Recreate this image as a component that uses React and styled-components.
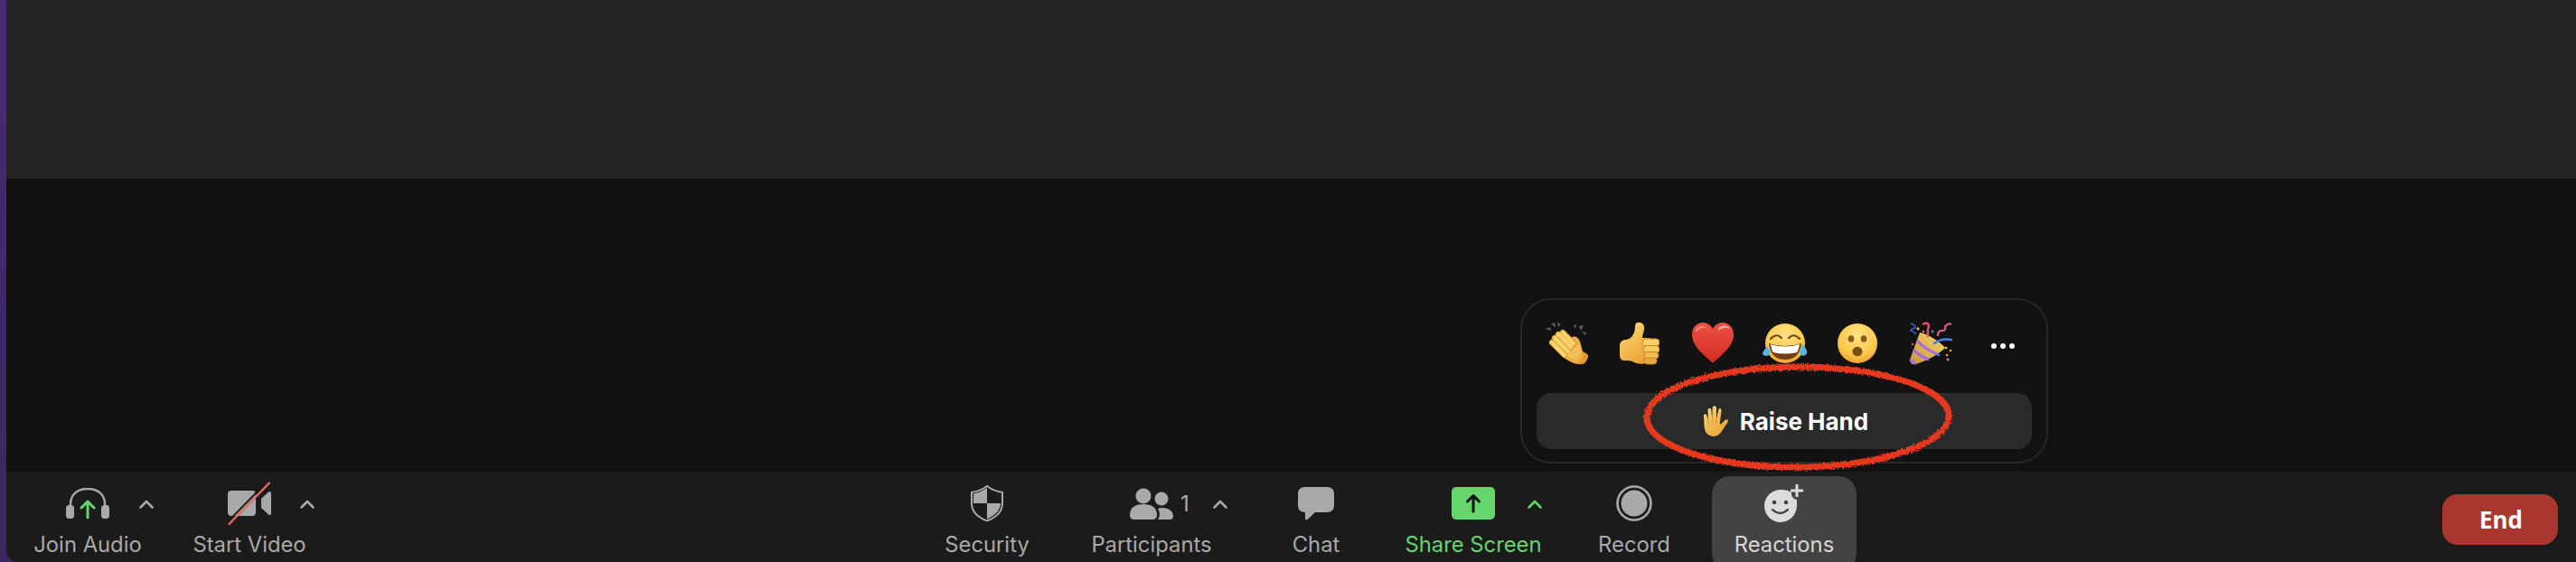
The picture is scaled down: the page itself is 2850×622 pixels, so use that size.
import React from "react";
import styled, { createGlobalStyle } from "styled-components";

const Global = createGlobalStyle`
  html, body { margin: 0; padding: 0; background: #111; }
  body { font-family: "Inter", "Liberation Sans", sans-serif; }
`;

const Page = styled.div`
  width: 2850px;
  height: 622px;
  display: flex;
  overflow: hidden;
  background: linear-gradient(#4a2a72, #38285f);
`;

const Meeting = styled.div`
  margin-left: 7px;
  flex: 1;
  display: flex;
  flex-direction: column;
  background: #111;
  border-bottom-left-radius: 14px;
  overflow: hidden;
`;

const VideoPanel = styled.div`
  height: 198px;
  background: #232323;
`;

const Stage = styled.div`
  flex: 1;
  position: relative;
  background: #111;
`;

const Toolbar = styled.div`
  height: 100px;
  box-sizing: border-box;
  padding: 5px 20px 0 10px;
  display: flex;
  background: #1b1b1b;
`;

const ToolItem = styled.div`
  width: ${(p) => p.$w}px;
  margin-left: ${(p) => p.$gap || 0}px;
  display: flex;
  flex-direction: column;
  align-items: center;
  padding-top: 10px;
  box-sizing: border-box;
  color: ${(p) => (p.$green ? "#64d66b" : p.$active ? "#d6d6d6" : "#a9a9a9")};
  background: ${(p) => (p.$active ? "#434343" : "transparent")};
  border-radius: ${(p) => (p.$active ? "20px" : "0")};
  height: ${(p) => (p.$active ? "105px" : "auto")};
`;

const IconSlot = styled.div`
  position: relative;
  height: 40px;
  display: flex;
  align-items: center;
  justify-content: center;
`;

const Caret = styled.svg`
  position: absolute;
  left: calc(100% + ${(p) => p.$x}px);
  top: 16px;
`;

const Count = styled.span`
  position: absolute;
  left: calc(100% + 8px);
  top: 7px;
  font-size: 24px;
  line-height: 28px;
`;

const ToolLabel = styled.div`
  margin-top: 11px;
  font-size: 23.8px;
  line-height: 30px;
  white-space: nowrap;
`;

const EndButton = styled.button`
  margin: 20px 0 0 auto;
  width: 128px;
  height: 56px;
  padding: 0 0 0 2px;
  border: 0;
  border-radius: 17px;
  background: #a93730;
  color: #fff;
  font-family: "Open Sans", sans-serif;
  font-weight: 700;
  font-size: 26px;
`;

const ReactionPopup = styled.div`
  position: absolute;
  left: 1675px;
  top: 132px;
  width: 584px;
  height: 183px;
  box-sizing: border-box;
  padding: 24px 16px 0;
  background: #121212;
  border: 2px solid #282828;
  border-radius: 34px;
`;

const EmojiRow = styled.div`
  display: grid;
  grid-template-columns: repeat(7, 80.3px);
  height: 48px;
  margin-left: -6px;
  align-items: center;
  justify-items: center;
`;

const Dots = styled.div`
  display: flex;
  gap: 4px;
  margin-top: 6px;
  span {
    width: 6px;
    height: 6px;
    border-radius: 50%;
    background: #fff;
  }
`;

const RaiseHand = styled.div`
  margin-top: 31px;
  height: 62px;
  padding-left: 2px;
  border-radius: 16px;
  background: #2a2a2a;
  display: flex;
  align-items: center;
  justify-content: center;
  gap: 12px;
  color: #fff;
  font-weight: 700;
  font-size: 26px;
`;

const Scribble = styled.svg`
  position: absolute;
  left: 126px;
  top: 67px;
  pointer-events: none;
`;

const Chevron = ({ x, color = "currentColor" }) => (
  <Caret $x={x} width="16" height="10" viewBox="0 0 16 10" fill="none">
    <path d="M1.500 8.500 8 2l6.500 6.500" stroke={color} strokeWidth="2.600" strokeLinecap="round" strokeLinejoin="round" />
  </Caret>
);

const Headset = () => (
  <svg width="48" height="34" viewBox="0 0 48 34" fill="none">
    <path d="M5 20 V18 C5 7 13 1 24 1 S43 7 43 18 V20" stroke="#a9a9a9" strokeWidth="2.400" />
    <rect x="0" y="19" width="9" height="15" rx="3.500" fill="#a9a9a9" />
    <rect x="39" y="19" width="9" height="15" rx="3.500" fill="#a9a9a9" />
    <path d="M24 33 V16 M17 22 l7 -7 l7 7" stroke="#64d66b" strokeWidth="3" strokeLinecap="round" strokeLinejoin="round" />
  </svg>
);

const VideoOff = () => (
  <svg width="48" height="48" viewBox="0 0 48 48" fill="none">
    <rect x="0" y="10" width="31" height="28" rx="4" fill="#a9a9a9" />
    <path d="M37 19 L45 11.500 Q48 10 48 13 V35 Q48 38 45 36.500 L37 29 Z" fill="#a9a9a9" />
    <path d="M0 48 L46 1" stroke="#1b1b1b" strokeWidth="2" transform="translate(-2.500 -1)" />
    <path d="M1.500 47 L46 1.500" stroke="#e8685f" strokeWidth="2.400" strokeLinecap="round" />
  </svg>
);

const Shield = () => (
  <svg width="36" height="40" viewBox="0 0 36 40">
    <path d="M18 1 C23 5 29 7 35 8 V20 C35 30 27 36 18 39.500 C9 36 1 30 1 20 V8 C7 7 13 5 18 1 Z" fill="none" stroke="#a9a9a9" strokeWidth="2" />
    <path d="M18 3 V20 H3 V9.500 C8 8.500 13 6.500 18 3 Z" fill="#a9a9a9" />
    <path d="M18 20 H33 C33 28 26 34 18 37.500 Z" fill="#a9a9a9" />
  </svg>
);

const People = () => (
  <svg width="48" height="35" viewBox="0 0 48 35" fill="#a9a9a9">
    <circle cx="15" cy="9" r="8.500" />
    <path d="M0 30 C0 21 7 18 15 18 S30 21 30 30 Q30 35 25 35 H5 Q0 35 0 30 Z" />
    <circle cx="35" cy="12" r="7.500" />
    <path d="M31 35 C34 31 33 26 31 23 C33 22 35 22 36 22 C43 22 48 26 48 31 Q48 35 44 35 Z" />
  </svg>
);

const ChatBubble = () => (
  <svg width="40" height="37" viewBox="0 0 40 37" fill="#a9a9a9">
    <path d="M8 0 H32 Q40 0 40 8 V20 Q40 28 32 28 H19 L10 36.500 Q8 37 8 35 V28 Q0 28 0 20 V8 Q0 0 8 0 Z" />
  </svg>
);

const ShareBox = () => (
  <svg width="48" height="36" viewBox="0 0 48 36">
    <rect width="48" height="36" rx="5" fill="#64d66b" />
    <path d="M24 27 V10 M17.500 16 L24 9.500 L30.500 16" stroke="#111" strokeWidth="3" fill="none" strokeLinecap="round" strokeLinejoin="round" />
  </svg>
);

const RecordDot = () => (
  <svg width="40" height="40" viewBox="0 0 40 40">
    <circle cx="20" cy="20" r="18.500" fill="none" stroke="#a9a9a9" strokeWidth="2.600" />
    <circle cx="20" cy="20" r="14.500" fill="#a9a9a9" />
  </svg>
);

const SmilePlus = () => (
  <svg width="46" height="42" viewBox="0 0 46 42">
    <path d="M19 6 C25 6 28 7 31 9 C30 13 34 17 37 17 C37 19 37 21 37 24 C37 33 29 42 19 42 C9 42 1 34 1 24 C1 14 9 6 19 6 Z" fill="#dcdcdc" />
    <circle cx="12" cy="20" r="2.300" fill="#434343" />
    <circle cx="25" cy="20" r="2.300" fill="#434343" />
    <path d="M10 28 Q18.500 36 27 28" stroke="#434343" strokeWidth="2.400" fill="none" strokeLinecap="round" />
    <path d="M37 0 V14 M30 7 H44" stroke="#dcdcdc" strokeWidth="3" />
  </svg>
);

const Skin = ({ id }) => (
  <linearGradient id={id} x1="0" y1="0" x2="0.600" y2="1">
    <stop offset="0" stopColor="#fbdc7a" />
    <stop offset="1" stopColor="#eca437" />
  </linearGradient>
);

const clapFingers = [
  [7, 23, 21, 37],
  [10, 18, 25, 33],
  [14, 14, 28, 28],
  [19, 12, 31, 24],
];

const Clap = () => (
  <svg width="48" height="48" viewBox="0 0 48 48">
    <defs><Skin id="clapSkin" /></defs>
    <path d="M0 8 L5 6 L6 10 Z M6 3 L10 1 L11 6 Z M13 1 L17 3 L14 6 Z M31 4 L34 3 L33 8 Z M37 5 L42 4 L39 10 Z M40 11 L45 12 L44 15 Z" fill="#5f5f5f" />
    <path d="M28 18 C32 15 36 17 38 22 L41 33 C44 35 47 36 47 38 C46 43 43 47 40 47 C37 47 33 47 29 45 C24 43 20 40 16 36 Z" fill="#efb146" />
    <path d="M41 33 C44 35 47 36 47 38 C46 43 43 47 40 47 C38 47 36 47 34 46 C39 44 42 39 41 33 Z" fill="#e3982c" />
    {clapFingers.map(([x1, y1, x2, y2]) => (
      <path key={x1} d={`M${x1} ${y1} L${x2} ${y2}`} stroke="#c98f2c" strokeWidth="6.400" strokeLinecap="round" />
    ))}
    {clapFingers.map(([x1, y1, x2, y2]) => (
      <path key={x1} d={`M${x1} ${y1} L${x2} ${y2}`} stroke="#fad26a" strokeWidth="4.800" strokeLinecap="round" />
    ))}
    <path d="M23 38 L37 25 L39 34 L33 42 Z" fill="#f4bf56" />
  </svg>
);

const Thumb = () => (
  <svg width="44" height="48" viewBox="0 0 44 48">
    <defs><Skin id="thumbSkin" /></defs>
    <path d="M20 1 C24 0 28 3 27 9 C26 13 25 16 25 18 H34 V42 C30 47 22 48 16 45 C13 43 9 43 5 43 C1 43 0 40 0 36 V27 C0 22 3 20 7 20 C14 19 17 12 17 5 C17 3 18 1 20 1 Z" fill="url(#thumbSkin)" />
    <rect x="25" y="19" width="19" height="8" rx="4" fill="#fbd26a" stroke="#c48a28" strokeWidth="1" />
    <rect x="26" y="26.500" width="18" height="8" rx="4" fill="#f8c95e" stroke="#c48a28" strokeWidth="1" />
    <rect x="27" y="33.500" width="16" height="7.500" rx="3.700" fill="#f3bb50" stroke="#c48a28" strokeWidth="1" />
    <rect x="27" y="40" width="14" height="7" rx="3.500" fill="#eaa83f" stroke="#c48a28" strokeWidth="1" />
  </svg>
);

const Heart = () => (
  <svg width="46" height="46" viewBox="0 0 46 46">
    <defs>
      <linearGradient id="heartFill" x1="0" y1="0" x2="0" y2="1">
        <stop offset="0" stopColor="#ee5245" />
        <stop offset="1" stopColor="#d32a20" />
      </linearGradient>
    </defs>
    <path d="M23 45 C14 36 0 27 0 13 C0 5 6 0 12 0 C17 0 21 3 23 7 C25 3 29 0 34 0 C40 0 46 5 46 13 C46 27 32 36 23 45 Z" fill="url(#heartFill)" />
    <path d="M29 7 C31 3 39 2 42 7 C39 5 33 5 29 9 Z" fill="#f7b9b3" />
    <path d="M4 8 C7 3 14 3 18 7 C14 5 8 5 4 11 Z" fill="#f28c82" />
  </svg>
);

const FaceFill = ({ id }) => (
  <radialGradient id={id} cx="0.500" cy="0.300" r="0.750">
    <stop offset="0" stopColor="#fee384" />
    <stop offset="0.650" stopColor="#fbc84d" />
    <stop offset="1" stopColor="#ee9a27" />
  </radialGradient>
);

const Laugh = () => (
  <svg width="50" height="46" viewBox="0 0 50 46">
    <defs><FaceFill id="laughFace" /></defs>
    <circle cx="25" cy="23" r="22" fill="url(#laughFace)" />
    <path d="M9 18 Q15 11 21 17 M29 17 Q35 11 41 18" stroke="#6d4415" strokeWidth="2.200" fill="none" strokeLinecap="round" />
    <path d="M7 23 Q25 29 43 23 Q41 41 25 41 Q9 41 7 23 Z" fill="#6d3f12" />
    <path d="M9 24 Q25 29 41 24 Q40 31 38 33 Q25 36 12 33 Q10 31 9 24 Z" fill="#fff" />
    <path d="M5 27 C8 30 9 33 8 35 C6 38 1 37 0 35 C0 32 3 29 5 27 Z" fill="#59b5ea" />
    <path d="M44 24 C47 27 50 31 49 34 C47 38 42 37 41 34 C41 31 43 28 44 24 Z" fill="#59b5ea" />
  </svg>
);

const Wow = () => (
  <svg width="44" height="44" viewBox="0 0 44 44">
    <defs><FaceFill id="wowFace" /></defs>
    <circle cx="22" cy="22" r="22" fill="url(#wowFace)" />
    <ellipse cx="15" cy="17" rx="3.300" ry="3.800" fill="#8a5a18" />
    <ellipse cx="29" cy="17" rx="3.300" ry="3.800" fill="#8a5a18" />
    <ellipse cx="22" cy="31" rx="5.500" ry="5.300" fill="#7a4d14" />
  </svg>
);

const Party = () => (
  <svg width="48" height="48" viewBox="0 0 48 48" fill="none">
    <defs>
      <linearGradient id="coneFill" x1="0" y1="1" x2="1" y2="0">
        <stop offset="0" stopColor="#c99433" />
        <stop offset="1" stopColor="#f6d874" />
      </linearGradient>
    </defs>
    <path d="M12 12 C22 14 34 22 40 29 C32 37 18 44 6 47.500 Q1 47 1 42 Z" fill="url(#coneFill)" />
    <path d="M9 21 Q18 31 32 36 M5 31 Q12 38 22 42 M1.500 42 Q4 45 8 46" stroke="#a96be0" strokeWidth="3.200" />
    <path d="M28 24 Q36 18 47 20" stroke="#3f82e8" strokeWidth="2.600" strokeLinecap="round" />
    <path d="M2 2 Q8 4 7 7 Q2 8 2 10 Q6 11 8 14" stroke="#3a63d8" strokeWidth="1.700" />
    <path d="M15 3 Q21 0 22 4 Q20 10 21 17" stroke="#e0506e" strokeWidth="2.400" />
    <path d="M32 16 Q32 9 37 10 Q41 10 40 5 Q44 1 47 3" stroke="#e0607a" strokeWidth="2.200" />
    <circle cx="10" cy="8" r="1.400" fill="#f5d84a" />
    <circle cx="16" cy="11" r="1.200" fill="#e77da0" />
    <circle cx="26" cy="11" r="1.400" fill="#4a90e8" />
    <circle cx="4" cy="25" r="1.300" fill="#e0506e" />
    <circle cx="41" cy="29" r="1.300" fill="#f5d84a" />
    <circle cx="46" cy="32" r="1.300" fill="#f0a040" />
    <circle cx="42" cy="37" r="1.300" fill="#f0a040" />
    <circle cx="33" cy="37" r="1.200" fill="#4a90e8" />
    <circle cx="43" cy="42" r="1.400" fill="#e77da0" />
  </svg>
);

const Hand = () => (
  <svg width="30" height="34" viewBox="0 0 32 36">
    <defs><Skin id="handSkin" /></defs>
    <path d="M4 30 C2 25 3 19 2 12 C2 9 5 9 6 12 L7.500 18 L7 5 C7 2 10.500 2 11 5 L12 16 L12.500 2 C13 -0.500 16.500 -0.500 17 2 L17 16 L19.500 5 C20 2 23 3 23 6 L21 20 C21 24 24 20 27 17 C30 15 32 17 30 20 C26 25 24 30 20 34 C14 38 7 36 4 30 Z" fill="url(#handSkin)" />
    <path d="M7.500 18 L8 22 M12 16 V21 M17 16 L16.500 21" stroke="#c48a28" strokeWidth="1" />
  </svg>
);

const emojis = [Clap, Thumb, Heart, Laugh, Wow, Party];

export default function App() {
  return (
    <Page>
      <Global />
      <Meeting>
        <VideoPanel />
        <Stage>
          <ReactionPopup>
            <EmojiRow>
              {emojis.map((Emoji, i) => (
                <Emoji key={i} />
              ))}
              <Dots>
                <span />
                <span />
                <span />
              </Dots>
            </EmojiRow>
            <RaiseHand>
              <Hand />
              Raise Hand
            </RaiseHand>
            <Scribble width="360" height="130" viewBox="0 0 360 130" fill="none">
              <defs>
                <filter id="rough" x="-5%" y="-10%" width="110%" height="120%">
                  <feTurbulence type="fractalNoise" baseFrequency="0.45" numOctaves="2" seed="4" />
                  <feDisplacementMap in="SourceGraphic" scale="5" />
                </filter>
              </defs>
              <path
                d="M12 62 C14 30 90 8 178 7 C270 7 344 30 346 60 C348 92 270 117 182 118 C92 119 10 96 12 62 Z"
                stroke="#e5391c"
                strokeWidth="7"
                filter="url(#rough)"
              />
            </Scribble>
          </ReactionPopup>
        </Stage>
        <Toolbar>
          <ToolItem $w={160}>
            <IconSlot>
              <Headset />
              <Chevron x={33} />
            </IconSlot>
            <ToolLabel>Join Audio</ToolLabel>
          </ToolItem>
          <ToolItem $w={198}>
            <IconSlot>
              <VideoOff />
              <Chevron x={32} />
            </IconSlot>
            <ToolLabel>Start Video</ToolLabel>
          </ToolItem>
          <ToolItem $w={164} $gap={635}>
            <IconSlot>
              <Shield />
            </IconSlot>
            <ToolLabel>Security</ToolLabel>
          </ToolItem>
          <ToolItem $w={200}>
            <IconSlot>
              <People />
              <Count>1</Count>
              <Chevron x={44} />
            </IconSlot>
            <ToolLabel>Participants</ToolLabel>
          </ToolItem>
          <ToolItem $w={164}>
            <IconSlot>
              <ChatBubble />
            </IconSlot>
            <ToolLabel>Chat</ToolLabel>
          </ToolItem>
          <ToolItem $w={184} $green>
            <IconSlot>
              <ShareBox />
              <Chevron x={36} />
            </IconSlot>
            <ToolLabel>Share Screen</ToolLabel>
          </ToolItem>
          <ToolItem $w={172}>
            <IconSlot>
              <RecordDot />
            </IconSlot>
            <ToolLabel>Record</ToolLabel>
          </ToolItem>
          <ToolItem $w={160} $active>
            <IconSlot>
              <SmilePlus />
            </IconSlot>
            <ToolLabel>Reactions</ToolLabel>
          </ToolItem>
          <EndButton>End</EndButton>
        </Toolbar>
      </Meeting>
    </Page>
  );
}
